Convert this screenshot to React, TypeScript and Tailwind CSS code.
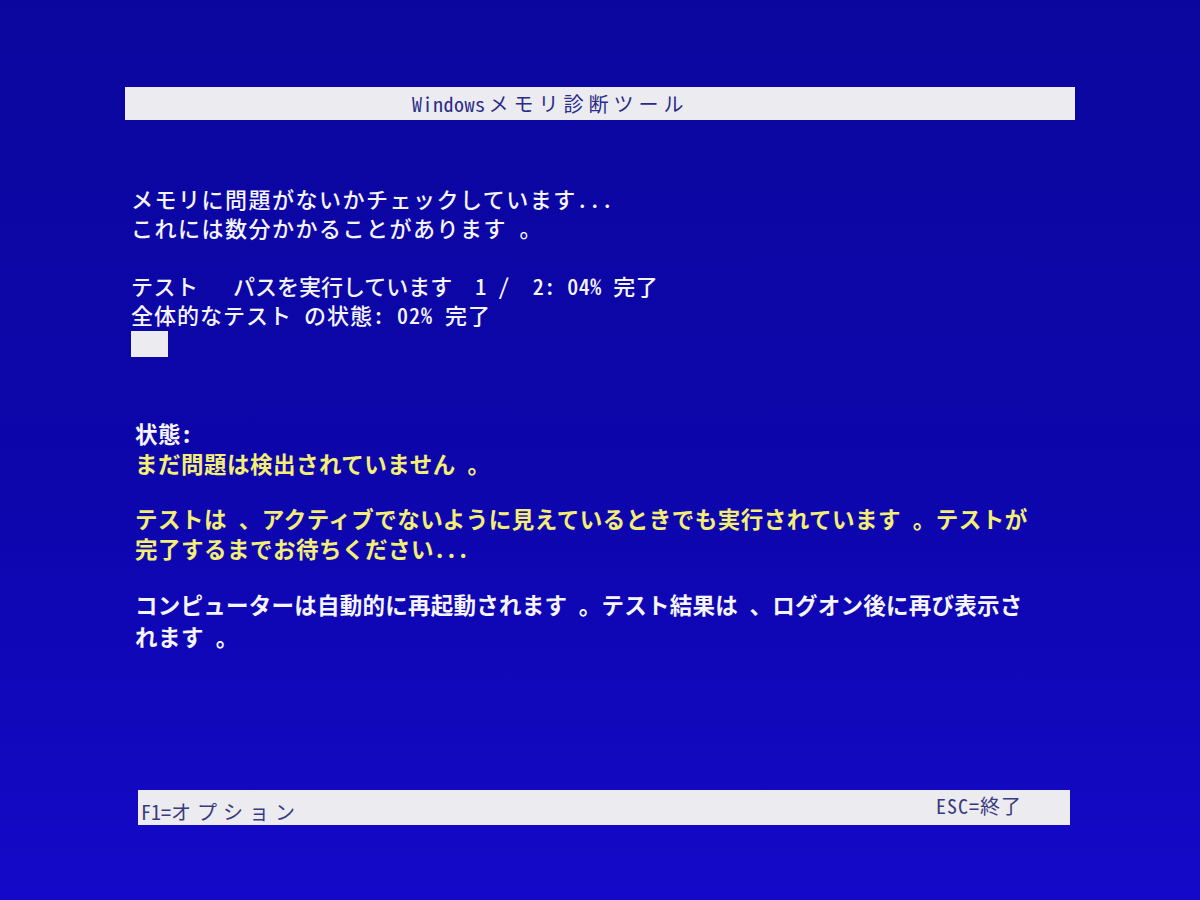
import React from "react";

const font = { fontFamily: '"Noto Sans CJK JP", "Noto Sans", sans-serif' };

export default function App() {
  return (
    <div
      className="w-[1200px] h-[900px] overflow-hidden bg-gradient-to-b from-[#0b079e] via-[#0c06aa] to-[#1409c8] pt-[87px] [font-feature-settings:'hwid']"
      style={font}
    >
      <div className="ml-[125px] w-[950px] h-[33px] bg-[#ecebf0] flex items-center pl-[287px] text-[20px] text-[#2b2b88] leading-none">
        <span className="tracking-[0.5px]">Windows</span>
        <span className="ml-[3px] tracking-[5px]">メモリ診断ツール</span>
      </div>

      <div className="ml-[131px] mt-[64px] text-[#f5f4fa] text-[22px] leading-[29px] font-medium whitespace-pre tracking-[1.5px]">
        <div>メモリに問題がないかチェックしています...</div>
        <div>これには数分かかることがあります 。</div>
        <div className="h-[29px]" />
        <div className="tracking-[0.5px]">
          テスト   <span className="tracking-[0px]">パスを実行しています</span>  1 /  2: 04% 完了
        </div>
        <div className="tracking-[1px]">全体的なテスト の状態: 02% 完了</div>
        <div className="mt-[2px] w-[37px] h-[26px] bg-[#ecebf0]" />
      </div>

      <div className="ml-[135px] mt-[62px] text-[22.5px] leading-[29.5px] font-bold whitespace-pre tracking-[0.5px]">
        <div className="text-[#f5f4fa]">状態:</div>
        <div className="text-[#f4ef74]">まだ問題は検出されていません 。</div>
        <div className="h-[26px]" />
        <div className="text-[#f4ef74]">テストは 、アクティブでないように見えているときでも実行されています 。テストが</div>
        <div className="text-[#f4ef74]">完了するまでお待ちください...</div>
        <div className="h-[27px]" />
        <div className="text-[#f5f4fa] tracking-[0.25px]">コンピューターは自動的に再起動されます 。テスト結果は 、ログオン後に再び表示さ</div>
        <div className="text-[#f5f4fa] mt-[2px]">れます 。</div>
      </div>

      <div className="ml-[138px] mt-[139px] w-[932px] h-[35px] bg-[#ecebf0] flex items-center justify-between pl-[3px] pr-[48px] text-[20px] text-[#3a3a7e] leading-none">
        <span className="mt-[8px]">
          F1=<span className="tracking-[6px]">オプション</span>
        </span>
        <span className="-mt-[4px] tracking-[1px]">ESC=終了</span>
      </div>
    </div>
  );
}
